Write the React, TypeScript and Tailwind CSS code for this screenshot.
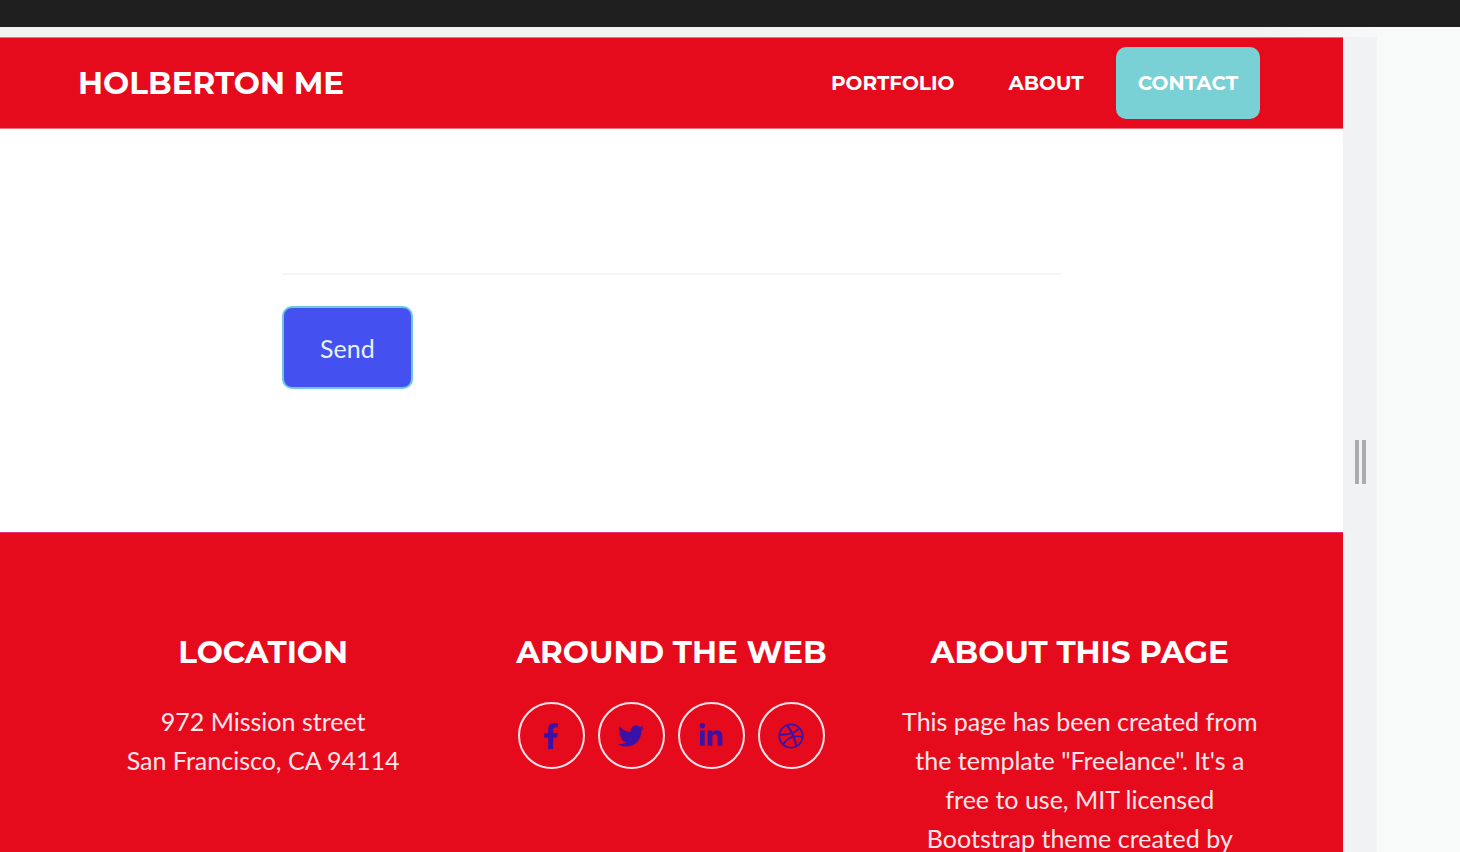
import { FaDribbble, FaFacebookF, FaLinkedinIn, FaTwitter } from "react-icons/fa";

const navLinks = [
  { label: "Portfolio", href: "#portfolio", active: false },
  { label: "About", href: "#about", active: false },
  { label: "Contact", href: "#contact", active: true },
];

const socialLinks = [
  { label: "Facebook", Icon: FaFacebookF },
  { label: "Twitter", Icon: FaTwitter },
  { label: "LinkedIn", Icon: FaLinkedinIn },
  { label: "Dribbble", Icon: FaDribbble },
];

const headingFont = "font-['Montserrat',Inter,sans-serif] font-bold uppercase";
const footerHeading = `${headingFont} mb-[30px] text-[31px] leading-10 whitespace-nowrap text-white`;

function Header() {
  return (
    <header className="flex h-[92px] shrink-0 items-center justify-between border-y border-t-[#c77f86] border-b-[#f0707b] bg-[#e50b1d] pr-[83px] pl-[78px] text-white">
      <a href="#top" className={`${headingFont} text-[31px] leading-[48px]`}>
        Holberton Me
      </a>
      <nav className="flex items-center gap-2.5">
        {navLinks.map(({ label, href, active }) => (
          <a
            key={label}
            href={href}
            className={`${headingFont} flex h-[72px] items-center rounded-[10px] px-[22px] text-[20px] leading-8 ${
              active ? "bg-[#79d0d5]" : ""
            }`}
          >
            {label}
          </a>
        ))}
      </nav>
    </header>
  );
}

function ContactForm() {
  return (
    <main className="shrink-0 bg-white pt-36 pb-[143px]">
      <form className="mx-auto w-[58%]" onSubmit={(e) => e.preventDefault()}>
        <hr className="mb-[31px] border-t-2 border-[#f4f4f4]" />
        <button
          type="submit"
          className="flex h-[83px] items-center rounded-[10px] border-2 border-[#6bcbdc] bg-[#4550f0] px-9 pt-0.5 text-[25px] leading-[39px] text-[#e6f3fb]"
        >
          Send
        </button>
      </form>
    </main>
  );
}

function Footer() {
  return (
    <footer className="grid grow grid-cols-3 border-t border-[#e8307f] bg-[#e50b1d] px-[59px] pt-[99px] text-center text-[25px] leading-[39px] text-[#ffe6ea]">
      <section className="px-6">
        <h2 className={footerHeading}>Location</h2>
        <p>
          972 Mission street
          <br />
          San Francisco, CA 94114
        </p>
      </section>
      <section className="px-6">
        <h2 className={footerHeading}>Around the Web</h2>
        <ul className="flex justify-center gap-[13px]">
          {socialLinks.map(({ label, Icon }) => (
            <li key={label}>
              <a
                href="#social"
                aria-label={label}
                className="flex size-[67px] items-center justify-center rounded-full border-2 border-[#ffe6ea] text-[#3b12a8]"
              >
                <Icon className="size-[26px]" />
              </a>
            </li>
          ))}
        </ul>
      </section>
      <section className="px-6">
        <h2 className={footerHeading}>About this page</h2>
        <p>
          This page has been created from the template "Freelance". It's a free to use, MIT licensed
          Bootstrap theme created by
        </p>
      </section>
    </footer>
  );
}

export default function App() {
  return (
    <div className="flex h-screen flex-col overflow-hidden bg-[#f8faf9] font-['Lato',sans-serif]">
      <div className="h-[27px] shrink-0 bg-[#1f1f1f]" />
      <div className="h-2.5 shrink-0 bg-linear-to-r from-[#f1f3f2] from-85% to-[#f8faf9] to-95%" />
      <div className="flex min-h-0 grow">
        <div className="flex min-w-0 grow flex-col overflow-hidden">
          <Header />
          <ContactForm />
          <Footer />
        </div>
        <div className="flex w-[34px] shrink-0 justify-center gap-[3px] bg-[#f1f2f4] pt-[403px]">
          <span className="h-11 w-1 bg-[#acacac]" />
          <span className="h-11 w-1 bg-[#acacac]" />
        </div>
        <div className="w-[83px] shrink-0" />
      </div>
    </div>
  );
}
